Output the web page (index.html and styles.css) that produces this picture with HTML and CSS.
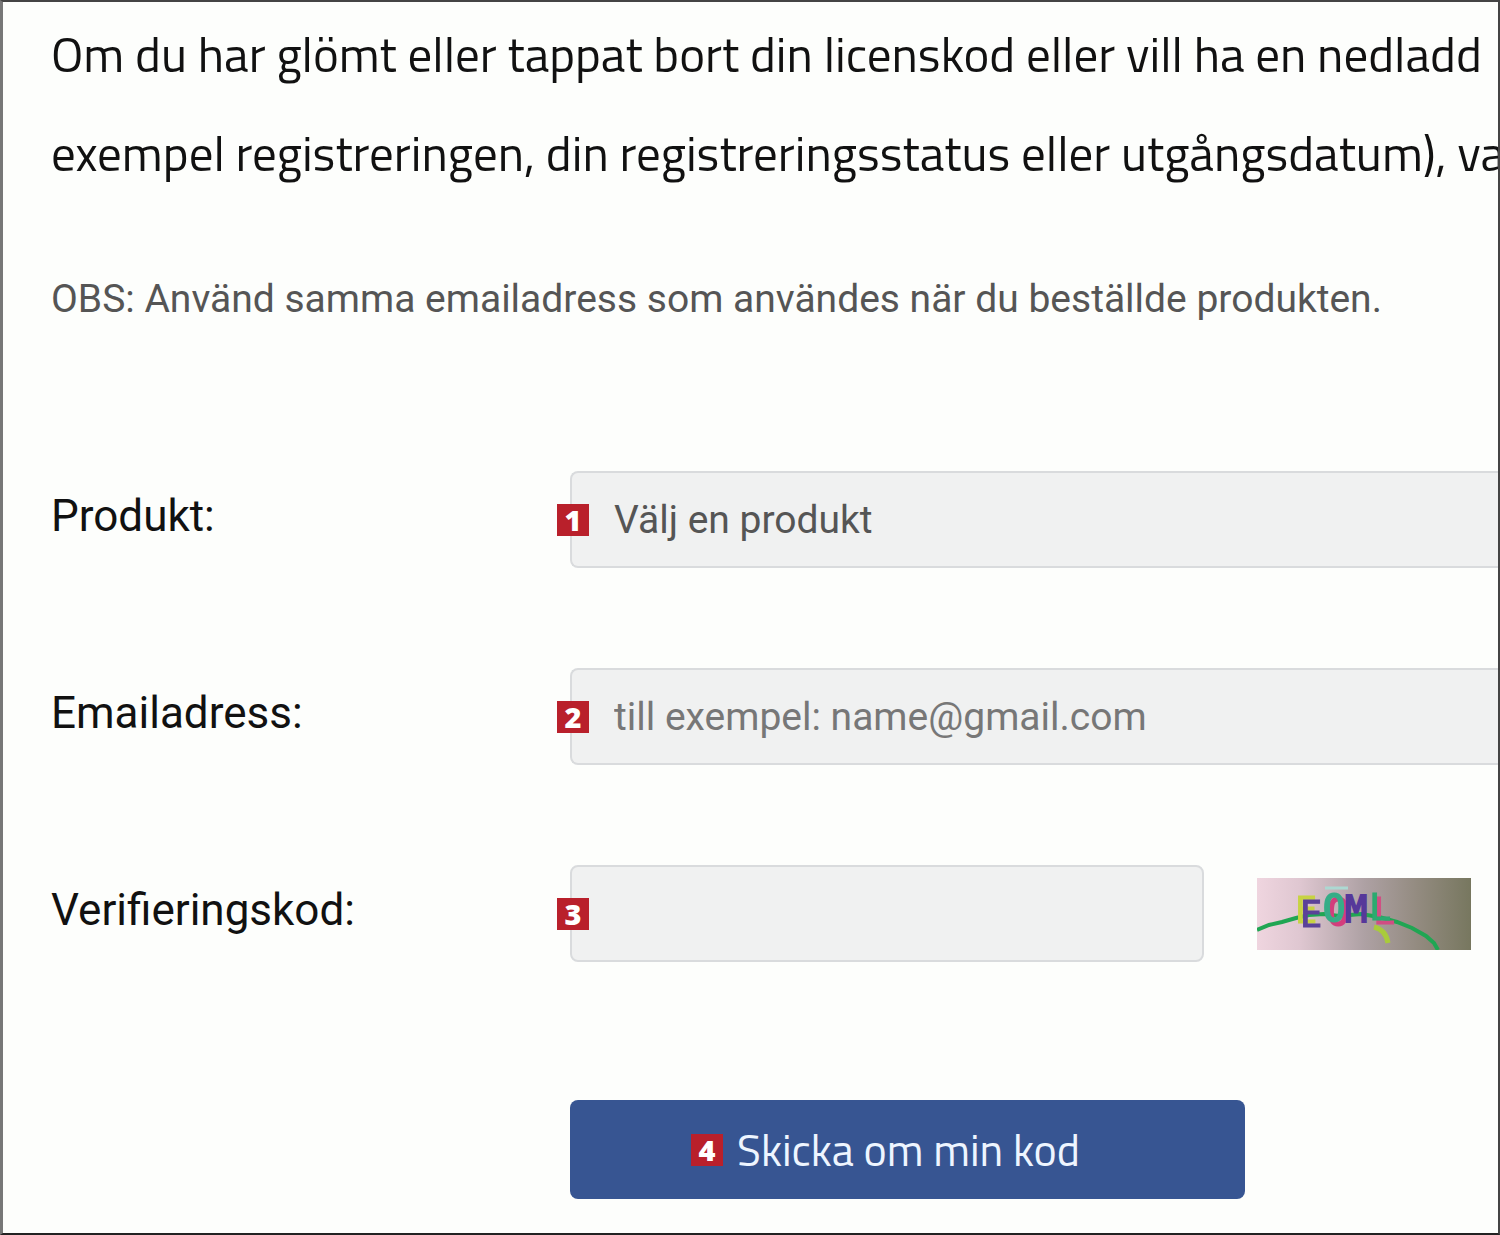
FILE: index.html
```
<!DOCTYPE html>
<html lang="sv">
<head>
    <meta charset="UTF-8">
    <meta name="viewport" content="width=device-width, initial-scale=1.0">
    <title>Skicka om min kod</title>
    <link rel="stylesheet" href="styles.css">
</head>
<body>
    <main class="page">
        <p class="intro">Om du har glömt eller tappat bort din licenskod eller vill ha en nedladd<br>exempel registreringen, din registreringsstatus eller utgångsdatum), va</p>
        <p class="note">OBS: Använd samma emailadress som användes när du beställde produkten.</p>

        <form class="resend-form">
            <div class="row">
                <label for="product">Produkt:</label>
                <div class="field">
                    <span class="badge">1</span>
                    <select id="product" class="control wide">
                        <option>Välj en produkt</option>
                    </select>
                </div>
            </div>
            <div class="row">
                <label for="email">Emailadress:</label>
                <div class="field">
                    <span class="badge">2</span>
                    <input id="email" class="control wide" type="email" placeholder="till exempel: name@gmail.com">
                </div>
            </div>
            <div class="row">
                <label for="code">Verifieringskod:</label>
                <div class="field code-field">
                    <span class="badge">3</span>
                    <input id="code" class="control" type="text">
                    <svg class="captcha" viewBox="0 0 214 72" role="img" aria-label="Captcha">
                        <defs>
                            <linearGradient id="fade">
                                <stop offset="0" stop-color="#efd5df"/>
                                <stop offset="0.2" stop-color="#dfc7d1"/>
                                <stop offset="0.5" stop-color="#aea1a4"/>
                                <stop offset="0.75" stop-color="#938b80"/>
                                <stop offset="1" stop-color="#77775f"/>
                            </linearGradient>
                        </defs>
                        <rect width="214" height="72" fill="url(#fade)"/>
                        <path d="M68 10H91" stroke="#acd8d2" stroke-width="3"/>
                        <path d="M0 52L12 47L25 44L39 40L52 37L67 36L82 38L104 36L122 39L140 44L155 50L169 58L177 65L181 72" fill="none" stroke="#20a653" stroke-width="4"/>
                        <path d="M117 49Q129 52 131 65" fill="none" stroke="#a9cb3b" stroke-width="5"/>
                        <g class="captcha-text">
                            <text class="letter-e" x="43" y="49">E</text>
                            <text class="letter-o" x="66" y="43">O</text>
                            <text class="letter-m" x="88" y="44">M</text>
                            <text class="letter-l" x="112" y="42">L</text>
                        </g>
                    </svg>
                </div>
            </div>
            <div class="row actions">
                <button type="submit" class="submit"><span class="badge">4</span>Skicka om min kod</button>
            </div>
        </form>
    </main>
</body>
</html>
```
FILE: styles.css
```
* {
    box-sizing: border-box;
}
body {
    margin: 0;
    background: #fdfefc;
    color: #111;
    font-family: Roboto, sans-serif;
}
.page {
    min-height: 100vh;
    padding: 2px 0 34px 48px;
    border: 2px solid #444;
    border-left: 3px solid #777;
    border-bottom-color: #222;
    overflow: hidden;
}
.intro {
    margin: 0;
    font-family: "Titillium Web", Roboto, sans-serif;
    font-size: 49px;
    line-height: 99px;
    white-space: nowrap;
}
.note {
    margin: 67px 0 142px;
    color: #555;
    font-size: 39px;
    line-height: 60px;
    white-space: nowrap;
}
.resend-form {
    display: flex;
    flex-direction: column;
    gap: 100px;
}
.row {
    display: grid;
    grid-template-columns: 519px 1fr;
    align-items: center;
}
.row label {
    padding-bottom: 8px;
    font-size: 44px;
}
.field {
    position: relative;
    display: flex;
    align-items: center;
}
.control {
    width: 634px;
    height: 97px;
    padding: 0 42px;
    border: 2px solid #d9dbdd;
    border-radius: 8px;
    background: #f0f1f1;
    color: #555;
    font-family: inherit;
    font-size: 39px;
    appearance: none;
}
.control::placeholder {
    color: #777;
    opacity: 1;
}
.wide {
    width: 100%;
    border-right: none;
    border-radius: 8px 0 0 8px;
}
.code-field {
    gap: 53px;
}
.badge {
    width: 32px;
    height: 32px;
    background: #b9202b;
    color: #fff;
    font-family: "Open Sans", sans-serif;
    font-size: 29px;
    font-weight: 800;
    line-height: 32px;
    text-align: center;
}
/* number sits on the left edge of the field */
.field .badge {
    position: absolute;
    left: -13px;
}
.captcha {
    width: 214px;
    height: 72px;
    flex-shrink: 0;
}
.captcha-text {
    font-family: "DejaVu Sans Mono", monospace;
    font-size: 37px;
    stroke-width: 1;
}
/* each letter throws a hard coloured shadow */
.letter-e {
    fill: #5b4399;
    stroke: #5b4399;
    filter: drop-shadow(-5px -4px 0 #c7d343);
}
.letter-o {
    fill: #37ad87;
    stroke: #37ad87;
    stroke-width: 2;
    filter: drop-shadow(4px 4px 0 #d33d7c);
}
.letter-m {
    fill: #56389a;
    stroke: #56389a;
    stroke-width: 2;
}
.letter-l {
    fill: #2baa70;
    stroke: #2baa70;
    filter: drop-shadow(4px 4px 0 #d14d83);
}
.actions {
    margin-top: 38px;
}
.submit {
    grid-column: 2;
    display: flex;
    align-items: center;
    justify-content: center;
    gap: 14px;
    width: 675px;
    height: 99px;
    padding: 0 44px 0 0;
    border: none;
    border-radius: 8px;
    background: #375592;
    color: #eef5ff;
    font-family: "Titillium Web", Roboto, sans-serif;
    font-size: 44px;
    cursor: pointer;
}
```
